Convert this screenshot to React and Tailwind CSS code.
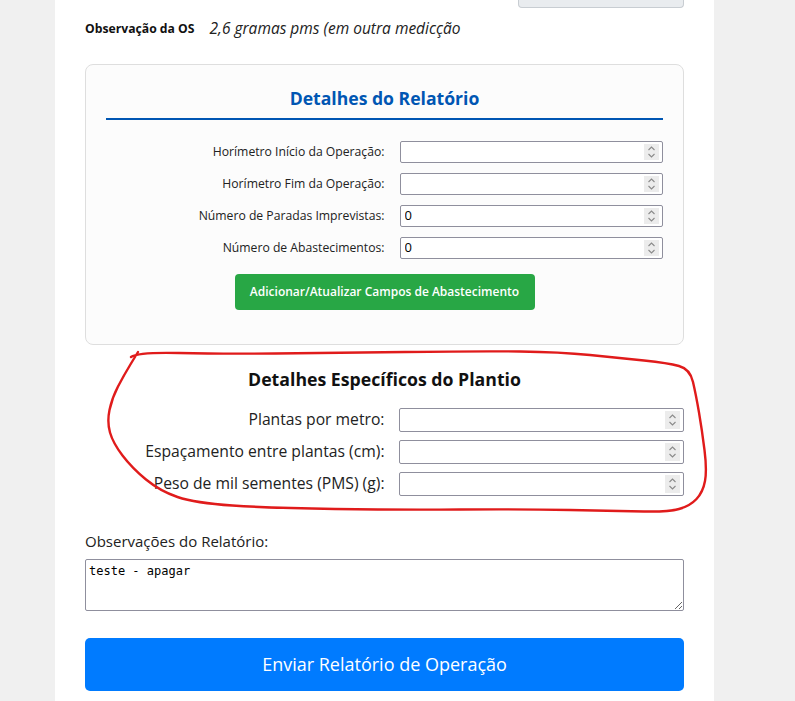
import React from 'react';

const sans = "font-['Open_Sans','Noto_Sans',sans-serif]";

const Spinner = ({ h = 18 }) => (
  <div className="my-[2px] mr-[3px] flex w-[15px] shrink-0 items-center justify-center bg-[#ececec]">
    <svg width="9" height={h - 4} viewBox="0 0 9 14" fill="none" stroke="#8a8a8a" strokeWidth="1.1">
      <polyline points="1.5,5 4.5,2 7.5,5" />
      <polyline points="1.5,9 4.5,12 7.5,9" />
    </svg>
  </div>
);

const NumberField = ({ value = '', tall = false }) => (
  <div
    className={`flex flex-1 rounded-[2px] border border-[#8f8f9d] bg-white ${tall ? 'h-[24px]' : 'h-[22px]'}`}
  >
    <input
      type="text"
      defaultValue={value}
      className="min-w-0 flex-1 bg-transparent px-[4px] text-[13px] text-black outline-none"
    />
    <Spinner h={tall ? 20 : 18} />
  </div>
);

// annotation stroke drawn over the screenshot
const annotation = [
  [131, 357], [138, 352], [220, 354], [330, 353], [480, 351], [560, 352], [620, 358],
  [668, 363], [690, 369], [696, 395], [702, 430], [707, 470], [703, 492], [690, 506],
  [668, 512], [620, 511], [520, 509], [400, 510], [270, 508], [195, 503], [160, 491],
  [132, 468], [113, 443], [107, 422], [112, 398], [124, 375], [138, 352],
];

const smooth = (pts) => {
  let d = `M${pts[0][0]},${pts[0][1]}`;
  for (let i = 1; i < pts.length - 1; i++) {
    const mx = (pts[i][0] + pts[i + 1][0]) / 2;
    const my = (pts[i][1] + pts[i + 1][1]) / 2;
    d += ` Q${pts[i][0]},${pts[i][1]} ${mx},${my}`;
  }
  const last = pts[pts.length - 1];
  d += ` L${last[0]},${last[1]}`;
  return d;
};

export default function App() {
  const reportRows = [
    { label: 'Horímetro Início da Operação:', value: '' },
    { label: 'Horímetro Fim da Operação:', value: '' },
    { label: 'Número de Paradas Imprevistas:', value: '0' },
    { label: 'Número de Abastecimentos:', value: '0' },
  ];
  const plantRows = [
    'Plantas por metro:',
    'Espaçamento entre plantas (cm):',
    'Peso de mil sementes (PMS) (g):',
  ];

  return (
    <div className={`relative min-h-screen bg-[#f0f0f0] ${sans}`}>
      <div className="ml-[55px] w-[659px] bg-white px-[30px] pb-[10px]">
        {/* tail of the previous field */}
        <div className="flex justify-end">
          <div className="h-[8px] w-[166px] rounded-b-[4px] border border-t-0 border-[#c8cdd2] bg-[#e9ecef]" />
        </div>

        {/* OS note */}
        <div className="mt-[11px] flex h-[20px] items-center">
          <span className="text-[12.2px] font-bold text-[#111]">Observação da OS</span>
          <span className="ml-[15px] text-[15.5px] italic text-[#222]">2,6 gramas pms (em outra medicção</span>
        </div>

        {/* Report details card */}
        <div className="mt-[25px] rounded-[8px] border border-[#dedede] bg-[#fcfcfc] px-[20px] pt-[20px] pb-[34px]">
          <h3 className="border-b-2 border-[#0056b3] pb-[7px] text-center text-[17.6px] font-bold leading-[26px] text-[#0056b3]">
            Detalhes do Relatório
          </h3>
          <div className="mt-[21px] flex flex-col gap-[10px]">
            {reportRows.map((r) => (
              <div key={r.label} className="flex h-[22px] items-center">
                <label className="w-1/2 shrink-0 text-right text-[12.2px] text-[#222]">{r.label}</label>
                <div className="ml-[15px] flex flex-1">
                  <NumberField value={r.value} />
                </div>
              </div>
            ))}
          </div>
          <div className="mt-[15px] flex justify-center">
            <button className="h-[36px] w-[300px] rounded-[4px] bg-[#28a745] text-[12px] font-semibold text-white">
              Adicionar/Atualizar Campos de Abastecimento
            </button>
          </div>
        </div>

        {/* Planting details */}
        <h3 className="mt-[22px] text-center text-[17.7px] font-bold leading-[24px] text-[#111]">
          Detalhes Específicos do Plantio
        </h3>
        <div className="mt-[17px] flex flex-col gap-[8px]">
          {plantRows.map((l) => (
            <div key={l} className="flex h-[24px] items-center">
              <label className="w-1/2 shrink-0 text-right text-[15.7px] text-[#222]">{l}</label>
              <div className="ml-[14px] flex flex-1">
                <NumberField tall />
              </div>
            </div>
          ))}
        </div>

        {/* Observations */}
        <div className="mt-[35px] h-[20px] text-[15px] leading-[20px] text-[#222]">Observações do Relatório:</div>
        <textarea
          defaultValue="teste - apagar"
          className="mt-[8px] block h-[52px] w-full rounded-[2px] border border-[#8f8f9d] px-[3px] py-[2px] font-['DejaVu_Sans_Mono',monospace] text-[12px] text-black outline-none"
        />

        <button className="mt-[27px] block h-[53px] w-full rounded-[5px] bg-[#007bff] text-[18px] text-white">
          Enviar Relatório de Operação
        </button>
      </div>

      <svg
        className="pointer-events-none absolute left-0 top-0"
        width="795"
        height="701"
        viewBox="0 0 795 701"
        fill="none"
      >
        <path d={smooth(annotation)} stroke="#e01b1b" strokeWidth="2.4" strokeLinecap="round" strokeLinejoin="round" />
      </svg>
    </div>
  );
}
